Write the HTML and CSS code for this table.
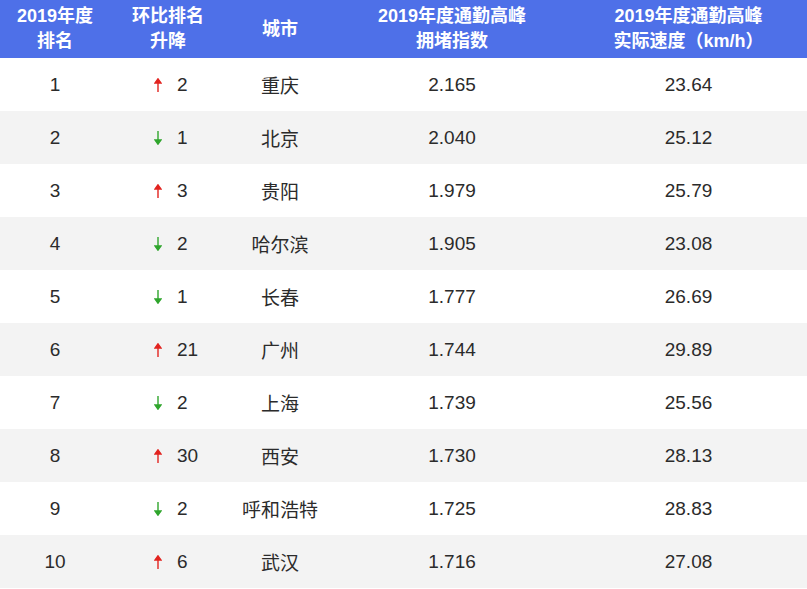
FILE: index.html
```html
<!DOCTYPE html>
<html lang="zh-CN">
<head>
<meta charset="utf-8">
<title>2019年度通勤高峰拥堵排名</title>
<link rel="stylesheet" href="styles.css">
</head>
<body>
<div class="table">
  <div class="row head">
    <div class="cell">2019年度<br>排名</div>
    <div class="cell">环比排名<br>升降</div>
    <div class="cell">城市</div>
    <div class="cell">2019年度通勤高峰<br>拥堵指数</div>
    <div class="cell">2019年度通勤高峰<br>实际速度（km/h）</div>
  </div>
  <div class="row">
    <div class="cell">1</div>
    <div class="cell change"><svg class="arrow up" viewBox="0 0 8 14"><path d="M4 4V14"/><path class="tip" d="M4 0.8L7 5H1Z"/></svg><span>2</span></div>
    <div class="cell">重庆</div>
    <div class="cell">2.165</div>
    <div class="cell">23.64</div>
  </div>
  <div class="row alt">
    <div class="cell">2</div>
    <div class="cell change"><svg class="arrow down" viewBox="0 0 8 14"><path d="M4 0V10"/><path class="tip" d="M4 13.2L7 9H1Z"/></svg><span>1</span></div>
    <div class="cell">北京</div>
    <div class="cell">2.040</div>
    <div class="cell">25.12</div>
  </div>
  <div class="row">
    <div class="cell">3</div>
    <div class="cell change"><svg class="arrow up" viewBox="0 0 8 14"><path d="M4 4V14"/><path class="tip" d="M4 0.8L7 5H1Z"/></svg><span>3</span></div>
    <div class="cell">贵阳</div>
    <div class="cell">1.979</div>
    <div class="cell">25.79</div>
  </div>
  <div class="row alt">
    <div class="cell">4</div>
    <div class="cell change"><svg class="arrow down" viewBox="0 0 8 14"><path d="M4 0V10"/><path class="tip" d="M4 13.2L7 9H1Z"/></svg><span>2</span></div>
    <div class="cell">哈尔滨</div>
    <div class="cell">1.905</div>
    <div class="cell">23.08</div>
  </div>
  <div class="row">
    <div class="cell">5</div>
    <div class="cell change"><svg class="arrow down" viewBox="0 0 8 14"><path d="M4 0V10"/><path class="tip" d="M4 13.2L7 9H1Z"/></svg><span>1</span></div>
    <div class="cell">长春</div>
    <div class="cell">1.777</div>
    <div class="cell">26.69</div>
  </div>
  <div class="row alt">
    <div class="cell">6</div>
    <div class="cell change"><svg class="arrow up" viewBox="0 0 8 14"><path d="M4 4V14"/><path class="tip" d="M4 0.8L7 5H1Z"/></svg><span>21</span></div>
    <div class="cell">广州</div>
    <div class="cell">1.744</div>
    <div class="cell">29.89</div>
  </div>
  <div class="row">
    <div class="cell">7</div>
    <div class="cell change"><svg class="arrow down" viewBox="0 0 8 14"><path d="M4 0V10"/><path class="tip" d="M4 13.2L7 9H1Z"/></svg><span>2</span></div>
    <div class="cell">上海</div>
    <div class="cell">1.739</div>
    <div class="cell">25.56</div>
  </div>
  <div class="row alt">
    <div class="cell">8</div>
    <div class="cell change"><svg class="arrow up" viewBox="0 0 8 14"><path d="M4 4V14"/><path class="tip" d="M4 0.8L7 5H1Z"/></svg><span>30</span></div>
    <div class="cell">西安</div>
    <div class="cell">1.730</div>
    <div class="cell">28.13</div>
  </div>
  <div class="row">
    <div class="cell">9</div>
    <div class="cell change"><svg class="arrow down" viewBox="0 0 8 14"><path d="M4 0V10"/><path class="tip" d="M4 13.2L7 9H1Z"/></svg><span>2</span></div>
    <div class="cell">呼和浩特</div>
    <div class="cell">1.725</div>
    <div class="cell">28.83</div>
  </div>
  <div class="row alt">
    <div class="cell">10</div>
    <div class="cell change"><svg class="arrow up" viewBox="0 0 8 14"><path d="M4 4V14"/><path class="tip" d="M4 0.8L7 5H1Z"/></svg><span>6</span></div>
    <div class="cell">武汉</div>
    <div class="cell">1.716</div>
    <div class="cell">27.08</div>
  </div>
</div>
</body>
</html>
```
FILE: styles.css
```css
html, body {
  margin: 0;
  padding: 0;
  background: #ffffff;
}

body {
  font-family: "Liberation Sans", "Noto Sans CJK SC", sans-serif;
  color: #2b2b2b;
}

.table {
  width: 807px;
}

.row {
  display: grid;
  grid-template-columns: 110px 116px 108px 236px 237px;
  height: 53px;
  align-items: center;
  font-size: 19px;
}

.row.alt {
  background: #f3f3f3;
}

.row.head {
  height: 58px;
  background: #4e70e8;
  color: #ffffff;
  font-size: 18px;
  font-weight: bold;
  line-height: 25px;
}

.cell {
  text-align: center;
}

.change {
  display: flex;
  align-items: center;
  justify-content: flex-start;
  padding-left: 44px;
  gap: 15px;
}

.arrow {
  width: 8px;
  height: 14px;
  display: block;
}

.arrow path {
  stroke-width: 1.4;
  fill: none;
}

.arrow .tip {
  stroke: none;
}

.arrow.up path {
  stroke: #e2231f;
}

.arrow.up .tip {
  fill: #e2231f;
}

.arrow.down path {
  stroke: #2fa52c;
}

.arrow.down .tip {
  fill: #2fa52c;
}
```
